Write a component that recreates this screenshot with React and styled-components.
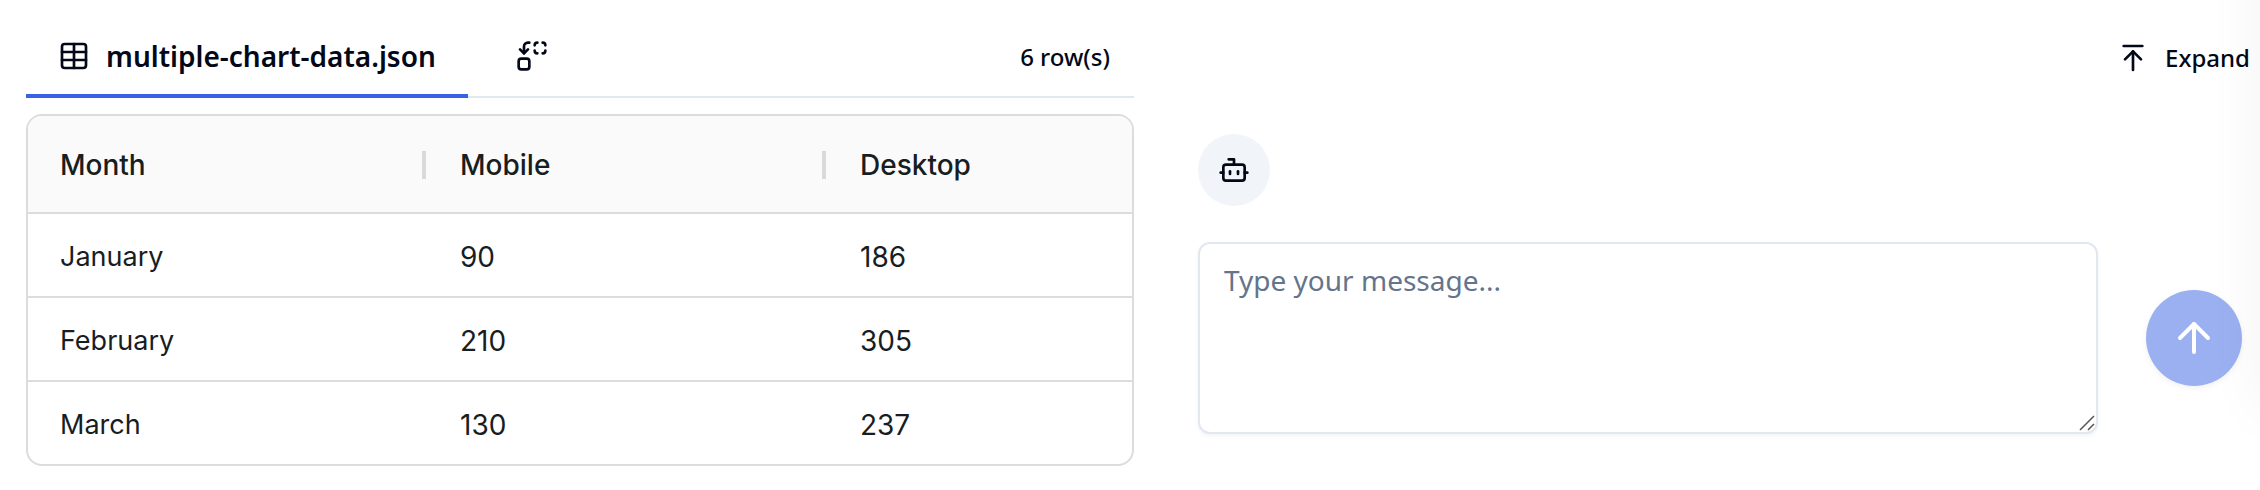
import React, { useState } from 'react';
import styled, { createGlobalStyle } from 'styled-components';
import { ArrowUp, ArrowUpToLine, Bot, Table } from 'lucide-react';

const GlobalStyle = createGlobalStyle`
  * {
    box-sizing: border-box;
  }
  body {
    margin: 0;
    background: #ffffff;
    color: #020817;
    font-family: 'Noto Sans', sans-serif;
  }
`;

const Page = styled.main`
  position: relative;
  display: grid;
  grid-template-columns: 554fr 531fr;
  column-gap: 64px;
  padding: 16px 0 24px 26px;
  overflow: hidden;
`;

const DataPanel = styled.section`
  min-width: 0;
`;

const TabBar = styled.div`
  display: flex;
  align-items: stretch;
  height: 82px;
  margin-bottom: 16px;
  box-shadow: inset 0 -2px 0 #e2e8f0;
`;

const Tab = styled.button`
  display: flex;
  align-items: center;
  gap: 16px;
  padding: 2px ${({ $wide }) => ($wide ? '48px' : '32px')} 0;
  border: 0;
  border-bottom: 4px solid ${({ $active }) => ($active ? '#3662e3' : 'transparent')};
  background: transparent;
  color: inherit;
  font-family: inherit;
  font-size: 28px;
  font-weight: 600;
  line-height: 40px;
  white-space: nowrap;
  cursor: pointer;
`;

const RowCount = styled.div`
  display: flex;
  align-items: center;
  margin-left: auto;
  padding-right: 24px;
  font-size: 24px;
  font-weight: 500;
  line-height: 32px;
`;

const TableFrame = styled.div`
  border: 2px solid #dcdcdc;
  border-radius: 16px;
  overflow: hidden;
`;

const DataTable = styled.table`
  width: 100%;
  table-layout: fixed;
  border-collapse: separate;
  border-spacing: 0;
  color: #181d1f;
  font-family: Inter, sans-serif;
  font-size: 28px;
  line-height: 40px;
  text-align: left;
`;

const HeadCell = styled.th`
  width: ${({ $last }) => ($last ? 'auto' : '400px')};
  height: 98px;
  padding: 2px 2px 0 32px;
  border-bottom: 2px solid #dcdcdc;
  background: #fafafa;
  font-weight: 450;
`;

const HeadLabel = styled.div`
  display: flex;
  align-items: center;
  justify-content: space-between;
`;

const ResizeHandle = styled.span`
  width: 4px;
  height: 28px;
  background: #dadada;
  cursor: ew-resize;
`;

const Cell = styled.td`
  height: 84px;
  padding: 4px 32px 0;
  border-bottom: 2px solid #dcdcdc;
  font-size: ${({ $label }) => ($label ? '27px' : '28px')};

  tr:last-child > & {
    height: 82px;
    border-bottom: 0;
  }
`;

const ChatPanel = styled.section`
  display: flex;
  flex-direction: column;
  min-width: 0;
`;

const ExpandButton = styled.button`
  display: flex;
  align-items: center;
  align-self: flex-end;
  gap: 16px;
  height: 84px;
  margin-bottom: 34px;
  padding: 0 10px;
  border: 0;
  background: transparent;
  color: inherit;
  font-family: inherit;
  font-size: 24px;
  font-weight: 500;
  line-height: 32px;
  cursor: pointer;
`;

const Avatar = styled.div`
  display: flex;
  align-items: center;
  justify-content: center;
  width: 72px;
  height: 72px;
  margin-bottom: 36px;
  border-radius: 50%;
  background: #f1f5f9;
`;

const Composer = styled.form`
  display: flex;
  align-items: center;
  gap: 48px;
  padding-right: 18px;
`;

const InputWrap = styled.div`
  position: relative;
  display: flex;
  flex: 1;
  min-width: 0;
`;

const MessageInput = styled.textarea`
  flex: 1;
  min-width: 0;
  height: 192px;
  padding: 16px 24px;
  border: 2px solid #e2e8f0;
  border-radius: 12px;
  background: #ffffff;
  box-shadow: 0 2px 4px rgba(0, 0, 0, 0.05);
  color: inherit;
  font-family: inherit;
  font-size: 28px;
  line-height: 40px;
  resize: vertical;

  &::placeholder {
    color: #64748b;
  }

  &::-webkit-resizer {
    display: none;
  }
`;

const Grip = styled.svg`
  position: absolute;
  right: 3px;
  bottom: 3px;
  pointer-events: none;
`;

const SendButton = styled.button`
  display: flex;
  flex: none;
  align-items: center;
  justify-content: center;
  width: 96px;
  height: 96px;
  padding: 0;
  border: 0;
  border-radius: 50%;
  background: #9bb0f1;
  box-shadow: 0 2px 6px rgba(0, 0, 0, 0.06);
  color: #ffffff;
`;

// soft shade falling in from the right edge of the window
const EdgeShade = styled.div`
  position: absolute;
  top: -80px;
  bottom: 80px;
  left: 100%;
  width: 80px;
  box-shadow: 0 0 60px rgba(0, 0, 0, 0.05);
  pointer-events: none;
`;

const columns = ['Month', 'Mobile', 'Desktop'];

const rows = [
  { month: 'January', mobile: 90, desktop: 186 },
  { month: 'February', mobile: 210, desktop: 305 },
  { month: 'March', mobile: 130, desktop: 237 },
];

const ReplaceIcon = () => (
  <svg
    width="32"
    height="32"
    viewBox="0 0 24 24"
    fill="none"
    stroke="currentColor"
    strokeWidth="2"
    strokeLinecap="round"
    strokeLinejoin="round"
    aria-hidden="true"
  >
    <path d="M14 4c0-1.1.9-2 2-2" />
    <path d="M20 2c1.1 0 2 .9 2 2" />
    <path d="M22 8c0 1.1-.9 2-2 2" />
    <path d="M16 10c-1.1 0-2-.9-2-2" />
    <path d="m3 7 3 3 3-3" />
    <path d="M6 10V5c0-1.7 1.3-3 3-3h1" />
    <rect width="8" height="8" x="2" y="14" rx="2" />
  </svg>
);

const DataGrid = () => (
  <TableFrame>
    <DataTable>
      <thead>
        <tr>
          {columns.map((name, index) => {
            const last = index === columns.length - 1;
            return (
              <HeadCell key={name} scope="col" $last={last}>
                <HeadLabel>
                  {name}
                  {!last && <ResizeHandle />}
                </HeadLabel>
              </HeadCell>
            );
          })}
        </tr>
      </thead>
      <tbody>
        {rows.map((row) => (
          <tr key={row.month}>
            <Cell $label>{row.month}</Cell>
            <Cell>{row.mobile}</Cell>
            <Cell>{row.desktop}</Cell>
          </tr>
        ))}
      </tbody>
    </DataTable>
  </TableFrame>
);

const App = () => {
  const [message, setMessage] = useState('');

  return (
    <>
      <GlobalStyle />
      <Page>
        <DataPanel>
          <TabBar>
            <Tab type="button" $active>
              <Table size={32} />
              multiple-chart-data.json
            </Tab>
            <Tab type="button" aria-label="Replace file" $wide>
              <ReplaceIcon />
            </Tab>
            <RowCount>6 row(s)</RowCount>
          </TabBar>
          <DataGrid />
        </DataPanel>
        <ChatPanel>
          <ExpandButton type="button">
            <ArrowUpToLine size={32} />
            Expand
          </ExpandButton>
          <Avatar>
            <Bot size={32} />
          </Avatar>
          <Composer onSubmit={(e) => e.preventDefault()}>
            <InputWrap>
              <MessageInput
                aria-label="Message"
                placeholder="Type your message..."
                value={message}
                onChange={(e) => setMessage(e.target.value)}
              />
              <Grip width="16" height="16" viewBox="0 0 16 16" stroke="#555555" strokeWidth="1.5">
                <path d="M1 15 15 1M9 15l6-6" />
              </Grip>
            </InputWrap>
            <SendButton type="submit" aria-label="Send message">
              <ArrowUp size={48} />
            </SendButton>
          </Composer>
        </ChatPanel>
        <EdgeShade />
      </Page>
    </>
  );
};

export default App;
